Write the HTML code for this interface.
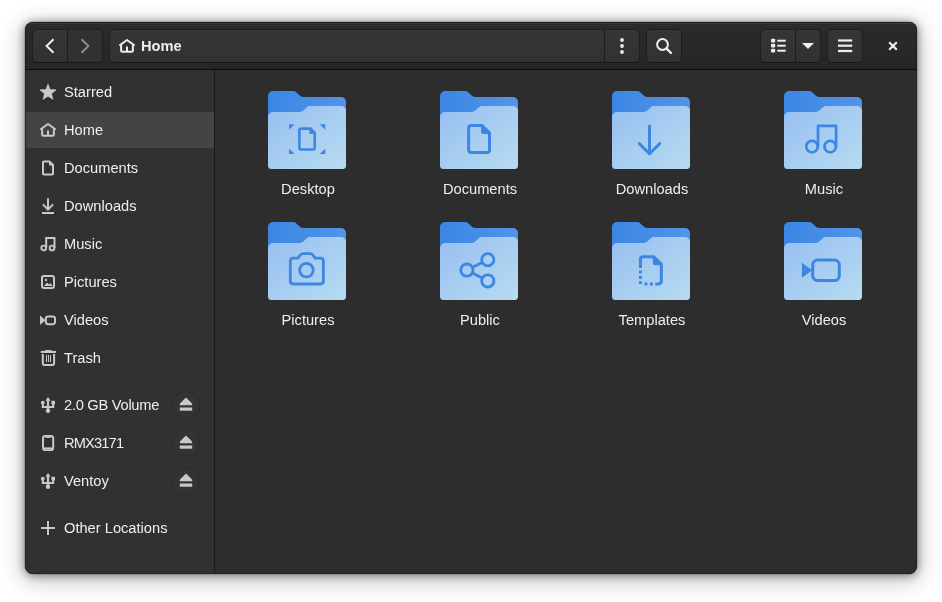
<!DOCTYPE html>
<html lang="en">
<head>
<meta charset="utf-8">
<title>Home</title>
<style>
*{box-sizing:border-box;margin:0;padding:0}
html,body{width:942px;height:602px;overflow:hidden;background:#ffffff}
body{font-family:"Liberation Sans",sans-serif;font-size:14.67px;color:#eeeeec;position:relative}
#win{will-change:transform;position:absolute;left:25px;top:22px;width:892px;height:552px;border-radius:8px 8px 8px 8px;background:#2d2d2d;overflow:hidden;
 box-shadow:0 0 0 1px rgba(0,0,0,0.12),0 1px 9px 1px rgba(0,0,0,0.38),0 4px 21px 4px rgba(0,0,0,0.22)}
#hdr{position:absolute;left:0;top:0;width:892px;height:48px;background:linear-gradient(to top,#262626,#2b2b2b);border-bottom:1px solid #0c0c0c}
#hdr:before{content:"";position:absolute;left:1px;top:1px;width:890px;height:1px;background:rgba(255,255,255,0.075)}
.btn{position:absolute;top:7px;height:34px;border:1px solid #1e1e1e;border-bottom-color:#181818;background:linear-gradient(to top,#323232 2px,#353535);border-radius:5px;box-shadow:inset 0 1px rgba(255,255,255,0.02)}
.btn svg{position:absolute;display:block}
#side{position:absolute;left:0;top:48px;width:190px;height:504px;background:#313131;border-right:1px solid #1b1b1b}
.row{position:absolute;left:1px;width:188px;height:38px}
.row.sel:before{content:"";position:absolute;left:0;top:1px;width:188px;height:36px;background:#444444}
.row svg{position:absolute;left:14px;top:11px;width:16px;height:16px;display:block}
.row span{position:absolute;left:38px;top:0;line-height:38px;white-space:nowrap}
.ej{position:absolute;left:146px;top:5px;width:28px;height:28px;border-radius:50%;border:1px solid #2b2b2b;background:#333333}
.ej svg{left:5px;top:5px}
#main{position:absolute;left:190px;top:48px;width:702px;height:504px;background:#2d2d2d}
.item{position:absolute;width:160px;height:120px}
.item svg{position:absolute;left:41px;top:0;width:78px;height:78px;display:block}
.item span{position:absolute;left:1px;width:160px;top:87.6px;line-height:20px;text-align:center;white-space:nowrap}
</style>
</head>
<body>
<div id="win">
 <div style="position:absolute;left:0;top:0;width:892px;height:552px;border-radius:8px;border:1px solid rgba(0,0,0,0.22);z-index:5;pointer-events:none"></div>
 <div id="hdr">
  <div class="btn" style="left:7px;width:36px;border-radius:5px 0 0 5px">
   <svg style="left:8.3px;top:8px" width="16" height="16" viewBox="0 0 16 16"><path d="M12.5 1.2 L5.6 8 L12.5 14.8" fill="none" stroke="#eeeeec" stroke-width="2"/></svg>
  </div>
  <div class="btn" style="left:42px;width:36px;border-radius:0 5px 5px 0;background:#313131">
   <svg style="left:8.6px;top:8px" width="16" height="16" viewBox="0 0 16 16"><path d="M4.5 1.2 L11.4 8 L4.5 14.8" fill="none" stroke="#8b8b8a" stroke-width="2"/></svg>
  </div>
  <div class="btn" id="path" style="left:84px;width:496px;border-radius:5px 0 0 5px">
   <svg style="left:9px;top:8px" width="16" height="16" viewBox="0 0 16 16"><path d="M1 7 L8 2 L15 7" fill="none" stroke="#eeeeec" stroke-width="2" stroke-linecap="round" stroke-linejoin="round"/><path d="M2.1 6.8 V12.6 Q2.1 13.8 3.3 13.8 H12.7 Q13.9 13.8 13.9 12.6 V6.8 M8 8.4 V13.8" fill="none" stroke="#eeeeec" stroke-width="2"/></svg>
   <span style="position:absolute;left:31px;top:0;line-height:32px;font-weight:bold;font-size:14.67px">Home</span>
  </div>
  <div class="btn" style="left:579px;width:36px;border-radius:0 5px 5px 0">
   <svg style="left:9px;top:8px" width="16" height="16" viewBox="0 0 16 16"><circle cx="8" cy="2" r="1.9" fill="#eeeeec"/><circle cx="8" cy="8" r="1.9" fill="#eeeeec"/><circle cx="8" cy="14" r="1.9" fill="#eeeeec"/></svg>
  </div>
  <div class="btn" style="left:621px;width:36px">
   <svg style="left:9px;top:8px" width="16" height="16" viewBox="0 0 16 16"><circle cx="6.5" cy="6.5" r="5.4" fill="none" stroke="#eeeeec" stroke-width="2"/><path d="M10.6 10.6 L15 15" stroke="#eeeeec" stroke-width="2.3" stroke-linecap="round"/></svg>
  </div>
  <div class="btn" style="left:735px;width:36px;border-radius:5px 0 0 5px">
   <svg style="left:9.6px;top:8.4px" width="16" height="16" viewBox="0 0 16 16" fill="#eeeeec"><rect x="0" y="0.8" width="4.2" height="3.8" rx="1"/><rect x="0" y="5.8" width="4.2" height="3.8" rx="1"/><rect x="0" y="10.8" width="4.2" height="3.8" rx="1"/><rect x="6.3" y="1.7" width="8.4" height="2"/><rect x="6.3" y="6.7" width="8.4" height="2"/><rect x="6.3" y="11.7" width="8.4" height="2"/></svg>
  </div>
  <div class="btn" style="left:770px;width:26px;border-radius:0 5px 5px 0">
   <svg style="left:4px;top:8px" width="16" height="16" viewBox="0 0 16 16"><path d="M2 5 H14 L8 11 Z" fill="#eeeeec"/></svg>
  </div>
  <div class="btn" style="left:802px;width:36px">
   <svg style="left:9px;top:8px" width="16" height="16" viewBox="0 0 16 16" fill="#eeeeec"><rect x="1" y="1.4" width="14.2" height="2.2"/><rect x="1" y="6.6" width="14.2" height="2.2"/><rect x="1" y="11.9" width="14.2" height="2.2"/></svg>
  </div>
  <svg style="position:absolute;left:860px;top:16px" width="16" height="16" viewBox="0 0 16 16"><path d="M4.2 4.2 L11.8 11.8 M11.8 4.2 L4.2 11.8" stroke="#eeeeec" stroke-width="2.2"/></svg>
 </div>

 <div id="side">
  <div class="row" style="top:3px"><svg viewBox="0 0 16 16"><path d="M8.00 0.00 L10.17 5.51 L16.08 5.87 L11.52 9.64 L13.00 15.38 L8.00 12.20 L3.00 15.38 L4.48 9.64 L-0.08 5.87 L5.83 5.51 Z" fill="#c8c8c6" stroke="#c8c8c6" stroke-width="0.6" stroke-linejoin="round"/></svg><span>Starred</span></div>
  <div class="row sel" style="top:41px"><svg viewBox="0 0 16 16"><path d="M1 7 L8 2 L15 7" fill="none" stroke="#c8c8c6" stroke-width="2" stroke-linecap="round" stroke-linejoin="round"/><path d="M2.1 6.8 V12.6 Q2.1 13.8 3.3 13.8 H12.7 Q13.9 13.8 13.9 12.6 V6.8 M8 8.4 V13.8" fill="none" stroke="#c8c8c6" stroke-width="2"/></svg><span>Home</span></div>
  <div class="row" style="top:79px"><svg viewBox="0 0 16 16"><path d="M4 1.5 H9.5 L13 5 V13.5 Q13 14.5 12 14.5 H4 Q3 14.5 3 13.5 V2.5 Q3 1.5 4 1.5 Z" fill="none" stroke="#c8c8c6" stroke-width="2" stroke-linejoin="round"/><path d="M9 1.5 V5.5 H13" fill="#c8c8c6"/></svg><span>Documents</span></div>
  <div class="row" style="top:117px"><svg viewBox="0 0 16 16"><path d="M8 0.2 V11.2 M2.9 6.4 L8 11.5 L13.1 6.4 M2 15 H14" fill="none" stroke="#c8c8c6" stroke-width="2"/></svg><span>Downloads</span></div>
  <div class="row" style="top:155px"><svg viewBox="0 0 16 16"><circle cx="3.7" cy="12" r="2.4" fill="none" stroke="#c8c8c6" stroke-width="1.9"/><circle cx="12" cy="12" r="2.4" fill="none" stroke="#c8c8c6" stroke-width="1.9"/><path d="M6.2 12 V2 H14.5 V12" fill="none" stroke="#c8c8c6" stroke-width="2"/></svg><span>Music</span></div>
  <div class="row" style="top:193px"><svg viewBox="0 0 16 16"><rect x="2" y="2" width="12" height="12" rx="2" fill="none" stroke="#c8c8c6" stroke-width="2"/><path d="M4 12 L7 8.5 L9 10.5 L10.5 9 L12.5 12 Z" fill="#c8c8c6"/><circle cx="6" cy="6" r="1.2" fill="#c8c8c6"/></svg><span>Pictures</span></div>
  <div class="row" style="top:231px"><svg viewBox="0 0 16 16"><rect x="5.8" y="4.4" width="9.3" height="7.8" rx="2.4" fill="none" stroke="#c8c8c6" stroke-width="2"/><path d="M0 3.6 L5.4 8.3 L0 13 Z" fill="#c8c8c6"/></svg><span>Videos</span></div>
  <div class="row" style="top:269px"><svg viewBox="0 0 16 16"><path d="M2.8 4 V13.2 Q2.8 14.9 4.5 14.9 H12.4 Q14.1 14.9 14.1 13.2 V4" fill="none" stroke="#c8c8c6" stroke-width="2"/><rect x="0.8" y="0.9" width="15.1" height="2.1" fill="#c8c8c6"/><rect x="5.2" y="0" width="6.3" height="1.2" fill="#c8c8c6"/><rect x="6" y="5" width="1" height="7" fill="#c8c8c6"/><rect x="8" y="5" width="1" height="7" fill="#c8c8c6"/><rect x="10" y="5" width="1" height="7" fill="#c8c8c6"/></svg><span>Trash</span></div>

  <div class="row" style="top:316px"><svg viewBox="0 0 16 16"><path d="M8 2 V14" stroke="#c8c8c6" stroke-width="2.2"/><path d="M8 0 L10.6 3.8 H5.4 Z" fill="#c8c8c6"/><circle cx="8" cy="13.8" r="2.2" fill="#c8c8c6"/><path d="M2.8 6 V10 H13.2 V6" fill="none" stroke="#c8c8c6" stroke-width="2"/><circle cx="2.8" cy="5.6" r="1.9" fill="#c8c8c6"/><rect x="11.4" y="3.8" width="3.6" height="3.6" fill="#c8c8c6"/></svg><span style="letter-spacing:-0.27px">2.0 GB Volume</span>
   <div class="ej"><svg viewBox="0 0 16 16"><path d="M8 0.4 L13.6 6 Q14.2 6.8 14.2 7.4 V8.2 H1.8 V7.4 Q1.8 6.8 2.4 6 Z" fill="#c8c8c6"/><rect x="1.8" y="10.5" width="12.4" height="3.2" fill="#c8c8c6"/></svg></div></div>
  <div class="row" style="top:354px"><svg viewBox="0 0 16 16"><rect x="3" y="1" width="10.2" height="14.2" rx="2.4" fill="none" stroke="#c8c8c6" stroke-width="2"/><path d="M3 13.4 H13.2" stroke="#c8c8c6" stroke-width="2"/><path d="M5.5 2.2 H10.7" stroke="#c8c8c6" stroke-width="1.4"/></svg><span style="letter-spacing:-0.85px">RMX3171</span>
   <div class="ej"><svg viewBox="0 0 16 16"><path d="M8 0.4 L13.6 6 Q14.2 6.8 14.2 7.4 V8.2 H1.8 V7.4 Q1.8 6.8 2.4 6 Z" fill="#c8c8c6"/><rect x="1.8" y="10.5" width="12.4" height="3.2" fill="#c8c8c6"/></svg></div></div>
  <div class="row" style="top:392px"><svg viewBox="0 0 16 16"><path d="M8 2 V14" stroke="#c8c8c6" stroke-width="2.2"/><path d="M8 0 L10.6 3.8 H5.4 Z" fill="#c8c8c6"/><circle cx="8" cy="13.8" r="2.2" fill="#c8c8c6"/><path d="M2.8 6 V10 H13.2 V6" fill="none" stroke="#c8c8c6" stroke-width="2"/><circle cx="2.8" cy="5.6" r="1.9" fill="#c8c8c6"/><rect x="11.4" y="3.8" width="3.6" height="3.6" fill="#c8c8c6"/></svg><span>Ventoy</span>
   <div class="ej"><svg viewBox="0 0 16 16"><path d="M8 0.4 L13.6 6 Q14.2 6.8 14.2 7.4 V8.2 H1.8 V7.4 Q1.8 6.8 2.4 6 Z" fill="#c8c8c6"/><rect x="1.8" y="10.5" width="12.4" height="3.2" fill="#c8c8c6"/></svg></div></div>

  <div class="row" style="top:439px"><svg viewBox="0 0 16 16"><path d="M8 1 V15 M1 8 H15" stroke="#c8c8c6" stroke-width="2"/></svg><span>Other Locations</span></div>
 </div>

 <div id="main">
  <div class="item" style="left:12px;top:21px"><svg viewBox="0 0 78 78"><defs><linearGradient id="b0" x1="0" y1="0" x2="1" y2="0"><stop offset="0" stop-color="#3b86e4"/><stop offset="1" stop-color="#5294e8"/></linearGradient><linearGradient id="f0" x1="0" y1="0" x2="1" y2="1"><stop offset="0" stop-color="#97bff0"/><stop offset="1" stop-color="#b7dbf1"/></linearGradient></defs><path d="M0 5 a5 5 0 0 1 5 -5 H25 q2 0 3.4 1.4 L32 4.8 q1.4 1.2 3.2 1.2 H73 a5 5 0 0 1 5 5 V70 H0 Z" fill="url(#b0)"/><path d="M0 26 a5 5 0 0 1 5 -5 H32 q2 0 3.4 -1.4 L38.5 16.4 q1.6 -1.4 3.4 -1.4 H73 a5 5 0 0 1 5 5 V74.5 a3.5 3.5 0 0 1 -3.5 3.5 H3.5 a3.5 3.5 0 0 1 -3.5 -3.5 Z" fill="url(#f0)"/><path d="M21 33.2 h5.6 l-5.6 5.6 Z M57.3 33.2 v5.6 l-5.6 -5.6 Z M21 63 v-5.6 l5.6 5.6 Z M57.3 63 h-5.6 l5.6 -5.6 Z" fill="#3d86e3"/><path d="M33 37.6 H42.5 L46.7 41.8 V57 Q46.7 58.5 45.2 58.5 H33 Q31.4 58.5 31.4 57 V39.1 Q31.4 37.6 33 37.6 Z" fill="none" stroke="#3d86e3" stroke-width="2.6"/><path d="M41.5 37 V43 H47.5 Z" fill="#3d86e3"/></svg><span>Desktop</span></div>
  <div class="item" style="left:184px;top:21px"><svg viewBox="0 0 78 78"><defs><linearGradient id="b1" x1="0" y1="0" x2="1" y2="0"><stop offset="0" stop-color="#3b86e4"/><stop offset="1" stop-color="#5294e8"/></linearGradient><linearGradient id="f1" x1="0" y1="0" x2="1" y2="1"><stop offset="0" stop-color="#97bff0"/><stop offset="1" stop-color="#b7dbf1"/></linearGradient></defs><path d="M0 5 a5 5 0 0 1 5 -5 H25 q2 0 3.4 1.4 L32 4.8 q1.4 1.2 3.2 1.2 H73 a5 5 0 0 1 5 5 V70 H0 Z" fill="url(#b1)"/><path d="M0 26 a5 5 0 0 1 5 -5 H32 q2 0 3.4 -1.4 L38.5 16.4 q1.6 -1.4 3.4 -1.4 H73 a5 5 0 0 1 5 5 V74.5 a3.5 3.5 0 0 1 -3.5 3.5 H3.5 a3.5 3.5 0 0 1 -3.5 -3.5 Z" fill="url(#f1)"/><path d="M31.2 34.4 H42 L49.5 41.9 V59 Q49.5 61.6 46.9 61.6 H31.2 Q28.6 61.6 28.6 59 V37 Q28.6 34.4 31.2 34.4 Z" fill="none" stroke="#3d86e3" stroke-width="3"/><path d="M41 33.5 V40.5 Q41 43 43.5 43 H50.5 Z" fill="#3d86e3"/></svg><span>Documents</span></div>
  <div class="item" style="left:356px;top:21px"><svg viewBox="0 0 78 78"><defs><linearGradient id="b2" x1="0" y1="0" x2="1" y2="0"><stop offset="0" stop-color="#3b86e4"/><stop offset="1" stop-color="#5294e8"/></linearGradient><linearGradient id="f2" x1="0" y1="0" x2="1" y2="1"><stop offset="0" stop-color="#97bff0"/><stop offset="1" stop-color="#b7dbf1"/></linearGradient></defs><path d="M0 5 a5 5 0 0 1 5 -5 H25 q2 0 3.4 1.4 L32 4.8 q1.4 1.2 3.2 1.2 H73 a5 5 0 0 1 5 5 V70 H0 Z" fill="url(#b2)"/><path d="M0 26 a5 5 0 0 1 5 -5 H32 q2 0 3.4 -1.4 L38.5 16.4 q1.6 -1.4 3.4 -1.4 H73 a5 5 0 0 1 5 5 V74.5 a3.5 3.5 0 0 1 -3.5 3.5 H3.5 a3.5 3.5 0 0 1 -3.5 -3.5 Z" fill="url(#f2)"/><path d="M37.5 35 V62 M27.2 52.5 L37.5 62.8 L47.8 52.5" fill="none" stroke="#3d86e3" stroke-width="3" stroke-linecap="round" stroke-linejoin="round"/></svg><span>Downloads</span></div>
  <div class="item" style="left:528px;top:21px"><svg viewBox="0 0 78 78"><defs><linearGradient id="b3" x1="0" y1="0" x2="1" y2="0"><stop offset="0" stop-color="#3b86e4"/><stop offset="1" stop-color="#5294e8"/></linearGradient><linearGradient id="f3" x1="0" y1="0" x2="1" y2="1"><stop offset="0" stop-color="#97bff0"/><stop offset="1" stop-color="#b7dbf1"/></linearGradient></defs><path d="M0 5 a5 5 0 0 1 5 -5 H25 q2 0 3.4 1.4 L32 4.8 q1.4 1.2 3.2 1.2 H73 a5 5 0 0 1 5 5 V70 H0 Z" fill="url(#b3)"/><path d="M0 26 a5 5 0 0 1 5 -5 H32 q2 0 3.4 -1.4 L38.5 16.4 q1.6 -1.4 3.4 -1.4 H73 a5 5 0 0 1 5 5 V74.5 a3.5 3.5 0 0 1 -3.5 3.5 H3.5 a3.5 3.5 0 0 1 -3.5 -3.5 Z" fill="url(#f3)"/><circle cx="28" cy="55.6" r="5.75" fill="none" stroke="#3d86e3" stroke-width="2.7"/><circle cx="46.2" cy="55.6" r="5.75" fill="none" stroke="#3d86e3" stroke-width="2.7"/><path d="M34 55.6 V34.9 H52.1 V55.6" fill="none" stroke="#3d86e3" stroke-width="2.7" stroke-linejoin="round"/></svg><span>Music</span></div>
  <div class="item" style="left:12px;top:152px"><svg viewBox="0 0 78 78"><defs><linearGradient id="b4" x1="0" y1="0" x2="1" y2="0"><stop offset="0" stop-color="#3b86e4"/><stop offset="1" stop-color="#5294e8"/></linearGradient><linearGradient id="f4" x1="0" y1="0" x2="1" y2="1"><stop offset="0" stop-color="#97bff0"/><stop offset="1" stop-color="#b7dbf1"/></linearGradient></defs><path d="M0 5 a5 5 0 0 1 5 -5 H25 q2 0 3.4 1.4 L32 4.8 q1.4 1.2 3.2 1.2 H73 a5 5 0 0 1 5 5 V70 H0 Z" fill="url(#b4)"/><path d="M0 26 a5 5 0 0 1 5 -5 H32 q2 0 3.4 -1.4 L38.5 16.4 q1.6 -1.4 3.4 -1.4 H73 a5 5 0 0 1 5 5 V74.5 a3.5 3.5 0 0 1 -3.5 3.5 H3.5 a3.5 3.5 0 0 1 -3.5 -3.5 Z" fill="url(#f4)"/><path d="M25.3 36.1 H30 L32.6 32.6 Q33.4 31.6 34.6 31.6 H42.6 Q43.8 31.6 44.6 32.6 L47.2 36.1 H52.4 Q55.4 36.1 55.4 39.1 V59 Q55.4 62 52.4 62 H25.3 Q22.3 62 22.3 59 V39.1 Q22.3 36.1 25.3 36.1 Z" fill="none" stroke="#3d86e3" stroke-width="2.8" stroke-linejoin="round"/><circle cx="38.4" cy="48.1" r="6.8" fill="none" stroke="#3d86e3" stroke-width="2.8"/></svg><span>Pictures</span></div>
  <div class="item" style="left:184px;top:152px"><svg viewBox="0 0 78 78"><defs><linearGradient id="b5" x1="0" y1="0" x2="1" y2="0"><stop offset="0" stop-color="#3b86e4"/><stop offset="1" stop-color="#5294e8"/></linearGradient><linearGradient id="f5" x1="0" y1="0" x2="1" y2="1"><stop offset="0" stop-color="#97bff0"/><stop offset="1" stop-color="#b7dbf1"/></linearGradient></defs><path d="M0 5 a5 5 0 0 1 5 -5 H25 q2 0 3.4 1.4 L32 4.8 q1.4 1.2 3.2 1.2 H73 a5 5 0 0 1 5 5 V70 H0 Z" fill="url(#b5)"/><path d="M0 26 a5 5 0 0 1 5 -5 H32 q2 0 3.4 -1.4 L38.5 16.4 q1.6 -1.4 3.4 -1.4 H73 a5 5 0 0 1 5 5 V74.5 a3.5 3.5 0 0 1 -3.5 3.5 H3.5 a3.5 3.5 0 0 1 -3.5 -3.5 Z" fill="url(#f5)"/><path d="M26.9 48.1 L47.8 37.7 M26.9 48.1 L47.8 58.9" fill="none" stroke="#3d86e3" stroke-width="2.8"/><circle cx="26.9" cy="48.1" r="6.1" fill="#a6cdf3" stroke="#3d86e3" stroke-width="2.8"/><circle cx="47.8" cy="37.7" r="6.1" fill="#a9cff3" stroke="#3d86e3" stroke-width="2.8"/><circle cx="47.8" cy="58.9" r="6.1" fill="#acd2f3" stroke="#3d86e3" stroke-width="2.8"/></svg><span>Public</span></div>
  <div class="item" style="left:356px;top:152px"><svg viewBox="0 0 78 78"><defs><linearGradient id="b6" x1="0" y1="0" x2="1" y2="0"><stop offset="0" stop-color="#3b86e4"/><stop offset="1" stop-color="#5294e8"/></linearGradient><linearGradient id="f6" x1="0" y1="0" x2="1" y2="1"><stop offset="0" stop-color="#97bff0"/><stop offset="1" stop-color="#b7dbf1"/></linearGradient></defs><path d="M0 5 a5 5 0 0 1 5 -5 H25 q2 0 3.4 1.4 L32 4.8 q1.4 1.2 3.2 1.2 H73 a5 5 0 0 1 5 5 V70 H0 Z" fill="url(#b6)"/><path d="M0 26 a5 5 0 0 1 5 -5 H32 q2 0 3.4 -1.4 L38.5 16.4 q1.6 -1.4 3.4 -1.4 H73 a5 5 0 0 1 5 5 V74.5 a3.5 3.5 0 0 1 -3.5 3.5 H3.5 a3.5 3.5 0 0 1 -3.5 -3.5 Z" fill="url(#f6)"/><path d="M28.4 46 V37.3 Q28.4 34.7 31 34.7 H41.8 L49.3 42.2 V59.3 Q49.3 61.9 46.7 61.9 H45" fill="none" stroke="#3d86e3" stroke-width="3"/><path d="M28.4 48.5 V62" fill="none" stroke="#3d86e3" stroke-width="3" stroke-dasharray="3 2.4"/><path d="M32.5 61.9 H45" fill="none" stroke="#3d86e3" stroke-width="3" stroke-dasharray="3 2.4"/><path d="M40.8 33.8 V40.8 Q40.8 43.3 43.3 43.3 H50.3 Z" fill="#3d86e3"/></svg><span>Templates</span></div>
  <div class="item" style="left:528px;top:152px"><svg viewBox="0 0 78 78"><defs><linearGradient id="b7" x1="0" y1="0" x2="1" y2="0"><stop offset="0" stop-color="#3b86e4"/><stop offset="1" stop-color="#5294e8"/></linearGradient><linearGradient id="f7" x1="0" y1="0" x2="1" y2="1"><stop offset="0" stop-color="#97bff0"/><stop offset="1" stop-color="#b7dbf1"/></linearGradient></defs><path d="M0 5 a5 5 0 0 1 5 -5 H25 q2 0 3.4 1.4 L32 4.8 q1.4 1.2 3.2 1.2 H73 a5 5 0 0 1 5 5 V70 H0 Z" fill="url(#b7)"/><path d="M0 26 a5 5 0 0 1 5 -5 H32 q2 0 3.4 -1.4 L38.5 16.4 q1.6 -1.4 3.4 -1.4 H73 a5 5 0 0 1 5 5 V74.5 a3.5 3.5 0 0 1 -3.5 3.5 H3.5 a3.5 3.5 0 0 1 -3.5 -3.5 Z" fill="url(#f7)"/><rect x="28.7" y="38.1" width="26.6" height="20.5" rx="5" fill="none" stroke="#3d86e3" stroke-width="3"/><path d="M17.9 40.7 L28.3 48.2 L17.9 55.7 Z" fill="#3d86e3"/></svg><span>Videos</span></div>
 </div>
</div>
</body>
</html>
